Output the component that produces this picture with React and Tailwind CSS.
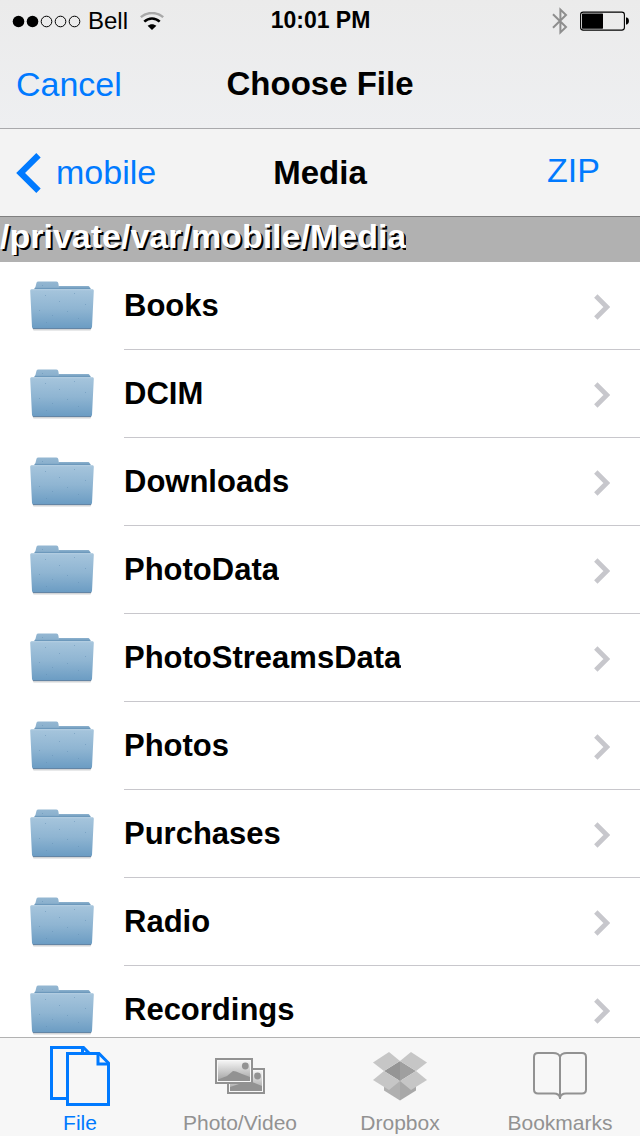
import React, { useState } from 'react';

const folders = [
  'Books',
  'DCIM',
  'Downloads',
  'PhotoData',
  'PhotoStreamsData',
  'Photos',
  'Purchases',
  'Radio',
  'Recordings',
];

const SignalDots = ({ strength = 2 }) => (
  <svg width="70" height="14" viewBox="0 0 70 14" role="img" aria-label={`Signal ${strength} of 5`}>
    {[0, 1, 2, 3, 4].map(i => (
      <circle
        key={i}
        cx={6.5 + i * 14}
        cy="7.5"
        r={i < strength ? 5.8 : 5.3}
        fill={i < strength ? '#000' : 'none'}
        stroke={i < strength ? 'none' : '#000'}
        strokeWidth="1"
      />
    ))}
  </svg>
);

const WifiIcon = () => (
  <svg width="24" height="18" viewBox="0 0 24 18" fill="none" aria-hidden="true">
    <path d="M0.8 5.2 C7 -0.4 17 -0.4 23.2 5.2" stroke="#a8a8a8" strokeWidth="2.4" />
    <path d="M4.3 9.6 C8.8 5.4 15.2 5.4 19.7 9.6" stroke="#000" strokeWidth="2.6" />
    <path d="M12 18 L7.6 13.8 C10.2 11.6 13.8 11.6 16.4 13.8 Z" fill="#000" />
  </svg>
);

const BluetoothIcon = () => (
  <svg width="16" height="28" viewBox="0 0 16 28" fill="none" aria-hidden="true">
    <path d="M1 7.2 L14 20 L8.4 25.4 V2.6 L14 8 L1 20.8" stroke="#8e8e8e" strokeWidth="2" />
  </svg>
);

const BatteryIcon = () => (
  <svg width="49" height="20" viewBox="0 0 49 20" role="img" aria-label="Battery">
    <rect x="0.6" y="1.1" width="43.8" height="18" rx="2.6" fill="none" stroke="#000" strokeWidth="1.1" />
    <rect x="2" y="2.5" width="21" height="15.2" rx="0.6" fill="#000" />
    <path d="M46 6.5 H47 Q49 7.2 49 10 Q49 12.8 47 13.5 H46 Z" fill="#000" />
  </svg>
);

const FolderIcon = () => (
  <svg width="64" height="50" viewBox="0 0 64 50" className="shrink-0" aria-hidden="true">
    <defs>
      <linearGradient id="folderFront" x1="0" y1="0" x2="0" y2="1">
        <stop offset="0" stopColor="#a6c5dc" />
        <stop offset="0.5" stopColor="#8fb5d2" />
        <stop offset="1" stopColor="#6b9cc3" />
      </linearGradient>
      <linearGradient id="folderBack" x1="0" y1="0" x2="0" y2="1">
        <stop offset="0" stopColor="#94b7d2" />
        <stop offset="1" stopColor="#86adcb" />
      </linearGradient>
    </defs>
    <rect x="3" y="46.5" width="58" height="3" rx="1" fill="#d2d4d6" />
    <path d="M4 9 L5.5 5.8 L6.5 1.8 Q6.8 0.5 8.5 0.5 H26.4 Q28.2 0.5 28.4 2.4 L28.8 5.3 H58 Q60 5.3 60.4 7.5 L61 9 Z" fill="url(#folderBack)" />
    <path d="M29 5.9 H59" stroke="#6d9bbe" strokeWidth="0.9" />
    <path d="M4.5 7.4 H60.4" stroke="#6794b8" strokeWidth="0.9" />
    <path d="M1.5 8.2 H62.5 Q64 8.2 63.8 9.8 L62 46 Q61.9 47.4 60.4 47.4 H3.6 Q2.1 47.4 2 46 L0.2 9.8 Q0 8.2 1.5 8.2 Z" fill="url(#folderFront)" />
    <path d="M1.4 8.7 H62.6" stroke="#b8d1e3" strokeWidth="0.9" />
    <path d="M2.8 47.5 H61.2" stroke="#54779a" strokeWidth="0.8" />
    <g fill="#628fb5" opacity="0.5">
      <rect x="15" y="14" width="1" height="1" />
      <rect x="29" y="20" width="1" height="1" />
      <rect x="44" y="12" width="1" height="1" />
      <rect x="55" y="23" width="1" height="1" />
      <rect x="9" y="29" width="1" height="1" />
      <rect x="22" y="34" width="1" height="1" />
      <rect x="37" y="30" width="1" height="1" />
      <rect x="48" y="37" width="1" height="1" />
      <rect x="16" y="41" width="1" height="1" />
      <rect x="12" y="4" width="1" height="1" />
    </g>
  </svg>
);

const ChevronIcon = () => (
  <svg width="16" height="26" viewBox="0 0 16 26" fill="none" className="shrink-0" aria-hidden="true">
    <path d="M1.8 2 L12.8 13 L1.8 24" stroke="#c7c7cc" strokeWidth="4.8" />
  </svg>
);

const BackIcon = () => (
  <svg width="26" height="40" viewBox="0 0 26 40" fill="none" aria-hidden="true">
    <path d="M22.5 2.2 L4.6 20 L22.5 37.8" stroke="#007aff" strokeWidth="6.2" />
  </svg>
);

const FileIcon = () => (
  <svg width="60" height="60" viewBox="0 0 60 60" fill="none" stroke="#007aff" strokeWidth="3" aria-hidden="true">
    <path d="M17 52.5 H1.5 V1.5 H33.5 L39 7 M32.5 1.5 V7" />
    <path d="M17.5 7.5 H49 L58.5 17 V58.5 H17.5 Z" />
    <path d="M48 7.5 V18 H58.5" />
  </svg>
);

const PhotoIcon = () => (
  <svg width="50" height="36" viewBox="0 0 50 36" aria-hidden="true">
    <defs>
      <linearGradient id="photoSky" x1="0" y1="0" x2="0" y2="1">
        <stop offset="0" stopColor="#f3f3f3" />
        <stop offset="1" stopColor="#a2a2a2" />
      </linearGradient>
    </defs>
    <rect x="13" y="11" width="36" height="24" fill="#f8f8f8" stroke="#929292" strokeWidth="2" />
    <rect x="15" y="13" width="32" height="20" fill="url(#photoSky)" />
    <path d="M15 29 L24 26 L31 22.5 L37 24 L47 28 V33 H15 Z" fill="#929292" />
    <circle cx="42.5" cy="18" r="3.4" fill="#929292" />
    <rect x="1" y="1" width="36" height="24" fill="#f8f8f8" stroke="#929292" strokeWidth="2" />
    <rect x="3" y="3" width="32" height="20" fill="url(#photoSky)" />
    <path d="M3 21.5 L12 18 L18 13 L21 13.5 L27 16 L35 19 V23 H3 Z" fill="#929292" />
    <circle cx="30.3" cy="8" r="3.4" fill="#929292" />
  </svg>
);

const DropboxIcon = () => (
  <svg width="54" height="49" viewBox="0 0 54 49" aria-hidden="true">
    <path d="M11 32 L27 28 V48.5 L11 38.5 Z" fill="#b0b0b0" />
    <path d="M43 32 L27 28 V48.5 L43 38.5 Z" fill="#a8a8a8" />
    <path d="M27 9 V29 L11 19 Z" fill="#959595" />
    <path d="M27 9 V29 L43 19 Z" fill="#9f9f9f" />
    <path d="M16 0 L27 9 L11 19 L0 10.5 Z" fill="#c6c6c6" />
    <path d="M38 0 L27 9 L43 19 L54 10.5 Z" fill="#c6c6c6" />
    <path d="M11 19 L27 29 L16 38 L0 28 Z" fill="#c6c6c6" />
    <path d="M43 19 L27 29 L38 38 L54 28 Z" fill="#c6c6c6" />
  </svg>
);

const BookmarksIcon = () => (
  <svg width="54" height="48" viewBox="0 0 54 48" fill="none" stroke="#929292" strokeWidth="2" aria-hidden="true">
    <path d="M27 47 V5 Q26 1 20 1 H5 Q1 1 1 5 V37.5 Q1 41.5 5 41.5 H21 Q26.2 41.5 27 46" />
    <path d="M27 5 Q28 1 34 1 H49 Q53 1 53 5 V37.5 Q53 41.5 49 41.5 H33 Q27.8 41.5 27 46" />
  </svg>
);

const tabs = [
  { label: 'File', Icon: FileIcon },
  { label: 'Photo/Video', Icon: PhotoIcon },
  { label: 'Dropbox', Icon: DropboxIcon },
  { label: 'Bookmarks', Icon: BookmarksIcon },
];

const StatusBar = () => (
  <div className="grid h-10 grid-cols-[1fr_auto_1fr] items-center pl-3 pr-[11px] pt-px">
    <div className="flex items-center">
      <SignalDots />
      <span className="ml-1.5 text-2xl">Bell</span>
      <span className="ml-3">
        <WifiIcon />
      </span>
    </div>
    <span className="text-[23px] font-bold">10:01 PM</span>
    <div className="flex items-center justify-end gap-3">
      <BluetoothIcon />
      <BatteryIcon />
    </div>
  </div>
);

const FolderRow = ({ name }) => (
  <li>
    <button type="button" className="flex h-[88px] w-full items-center gap-[30px] pl-[30px] text-left">
      <FolderIcon />
      <span className="flex h-full min-w-0 flex-1 items-center justify-between border-b border-[#c8c7cc] pr-[30px] pt-0.5">
        <span className="truncate text-[31px] font-bold">{name}</span>
        <ChevronIcon />
      </span>
    </button>
  </li>
);

export default function App() {
  const [activeTab, setActiveTab] = useState('File');

  return (
    <div className="flex h-screen flex-col overflow-hidden bg-white font-['Liberation_Sans',Arial,sans-serif] text-black">
      <header className="shrink-0 border-b border-[#a9a9ac] bg-gradient-to-b from-[#ebebeb] to-[#eeeff1]">
        <StatusBar />
        <div className="grid h-[88px] grid-cols-[1fr_auto_1fr] items-center px-4">
          <button type="button" className="justify-self-start text-[34px] text-[#007aff]">Cancel</button>
          <h1 className="text-[33px] font-bold">Choose File</h1>
        </div>
      </header>

      {/* Folder navigation */}
      <nav className="grid h-[88px] shrink-0 grid-cols-[1fr_auto_1fr] items-center border-b border-[#808080] bg-[#f3f3f3] pl-4">
        <button type="button" className="flex items-center gap-3.5 justify-self-start text-[34px] text-[#007aff]">
          <BackIcon />
          mobile
        </button>
        <h2 className="pr-4 text-[33px] font-bold">Media</h2>
        <button type="button" className="justify-self-end pb-1 pr-10 text-[34px] text-[#007aff]">ZIP</button>
      </nav>

      <div className="flex h-[45px] shrink-0 items-center bg-[#b1b1b1] pb-2">
        <p className="truncate text-[34px] leading-10 font-bold text-white [text-shadow:2px_2px_0_#000]">
          /private/var/mobile/Media
        </p>
      </div>

      <ul className="min-h-0 flex-1 overflow-y-auto [scrollbar-width:none]">
        {folders.map(name => (
          <FolderRow key={name} name={name} />
        ))}
      </ul>

      {/* Tab bar */}
      <nav className="grid shrink-0 grid-cols-4 border-t border-[#b2b2b2] bg-[#f7f7f7]">
        {tabs.map(({ label, Icon }) => (
          <button
            key={label}
            type="button"
            onClick={() => setActiveTab(label)}
            aria-current={activeTab === label ? 'page' : undefined}
            className={`flex flex-col items-center ${activeTab === label ? 'text-[#007aff]' : 'text-[#929292]'}`}
          >
            <span className="flex h-[76px] items-center">
              <Icon />
            </span>
            <span className="pb-1 text-[21px] leading-[18px]">{label}</span>
          </button>
        ))}
      </nav>
    </div>
  );
}
